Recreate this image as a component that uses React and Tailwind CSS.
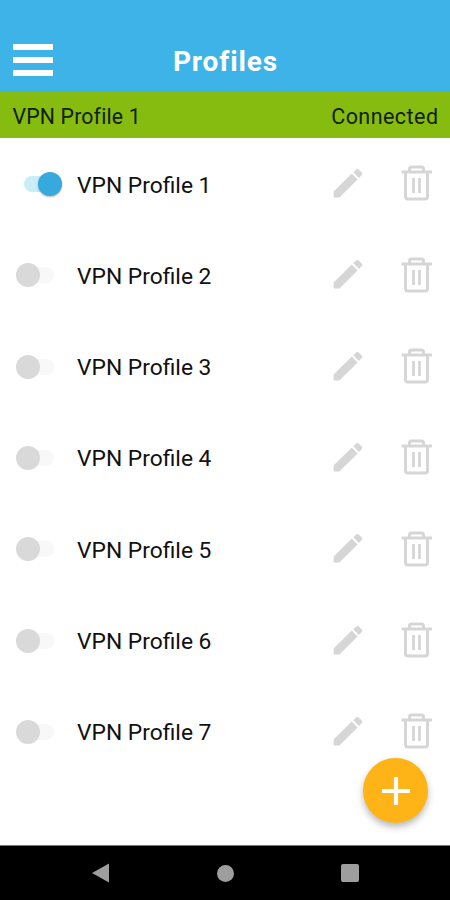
import React, { useState } from 'react';

const initialProfiles = [
  { id: 1, name: 'VPN Profile 1' },
  { id: 2, name: 'VPN Profile 2' },
  { id: 3, name: 'VPN Profile 3' },
  { id: 4, name: 'VPN Profile 4' },
  { id: 5, name: 'VPN Profile 5' },
  { id: 6, name: 'VPN Profile 6' },
  { id: 7, name: 'VPN Profile 7' },
];

const PencilIcon = () => (
  <svg width="30" height="30" viewBox="0 0 30 30" fill="#d6d6d6">
    <path d="M0.6 23.6 18.8 5.6 24.6 11.4 6.4 29.4H1.6Q0.6 29.4 0.6 28.4Z" />
    <path d="M20.3 4.3 23.2 1.4Q24.4 0.2 25.6 1.4L28.8 4.6Q30 5.8 28.8 7L25.9 9.9Z" />
  </svg>
);

const TrashIcon = () => (
  <svg width="32" height="36" viewBox="0 0 32 36" fill="none" stroke="#d6d6d6" strokeWidth="3">
    <path d="M0.5 7H31" />
    <path d="M8.5 6.5V4Q8.5 2 10.5 2H20.5Q22.5 2 22.5 4V6.5" />
    <path d="M4.5 7V31.5Q4.5 34 7 34H24Q26.5 34 26.5 31.5V7" />
    <path d="M12.5 13V28M18.5 13V28" strokeWidth="2.8" />
  </svg>
);

const Toggle = ({ on, onClick }) => (
  <button
    role="switch"
    aria-checked={on}
    onClick={onClick}
    className={`flex h-6 w-[38px] shrink-0 items-center ${on ? 'ml-6 mr-[15px]' : 'ml-4 mr-[23px]'}`}
  >
    {on ? (
      <span className="flex h-4 w-full items-center justify-end rounded-full bg-[#c9ecf7]">
        <span className="size-6 rounded-full bg-[#36a9dd] shadow-[0_1px_2px_rgba(0,0,0,0.3)]" />
      </span>
    ) : (
      <span className="flex h-4 w-full items-center rounded-full bg-[#f8f8f8]">
        <span className="size-6 rounded-full bg-[#d9d9d9]" />
      </span>
    )}
  </button>
);

const ProfileRow = ({ profile, active, onToggle }) => (
  <li className="flex h-[91.3px] items-center">
    <Toggle on={active} onClick={onToggle} />
    <span className="flex-1 pt-[3px] text-[22.8px] text-[#111]">{profile.name}</span>
    <button aria-label="Edit" className="mr-[38px] pb-[2px]">
      <PencilIcon />
    </button>
    <button aria-label="Delete" className="mr-[17px] pb-[1.5px]">
      <TrashIcon />
    </button>
  </li>
);

const App = () => {
  const [activeId, setActiveId] = useState(1);
  const active = initialProfiles.find((p) => p.id === activeId);

  return (
    <div className="relative flex h-[900px] w-[450px] flex-col overflow-hidden bg-white font-[Roboto,sans-serif]">
      <header className="grid h-[92px] shrink-0 grid-cols-[1fr_auto_1fr] items-end bg-[#3db3e8] px-[13px] pb-[14px]">
        <button aria-label="Menu" className="mb-[2.5px] flex w-10 flex-col gap-[7px]">
          <span className="h-[5.7px] bg-white" />
          <span className="h-[5.7px] bg-white" />
          <span className="h-[5.7px] bg-white" />
        </button>
        <h1 className="pl-[1px] text-[28px] leading-8 font-bold tracking-[0.9px] text-white">Profiles</h1>
      </header>

      <div className="flex h-[45.5px] shrink-0 items-center justify-between bg-[#86bc0f] pt-[4px] pr-[11.5px] pl-[12.5px] text-[#12200a]">
        <span className="text-[21.3px] tracking-[0.15px]">{active ? active.name : ''}</span>
        <span className="text-[21.5px] tracking-[0.45px]">{active ? 'Connected' : 'Disconnected'}</span>
      </div>

      <ul className="flex-1 pt-[1px]">
        {initialProfiles.map((profile) => (
          <ProfileRow
            key={profile.id}
            profile={profile}
            active={profile.id === activeId}
            onToggle={() => setActiveId(profile.id === activeId ? null : profile.id)}
          />
        ))}
      </ul>

      <button
        aria-label="Add profile"
        className="absolute top-[758px] left-[363px] flex size-[65px] items-center justify-center rounded-full bg-[#feb316] shadow-[0_4px_7px_rgba(0,0,0,0.28)]"
      >
        <svg width="28" height="28" viewBox="0 0 28 28" stroke="#fff" strokeWidth="4.2">
          <path d="M14 0V28M0 14H28" />
        </svg>
      </button>

      <nav className="flex h-[55px] shrink-0 items-center justify-between border-t border-[#777] bg-black pr-[91.5px] pl-[91.5px]">
        <svg width="18" height="20" viewBox="0 0 18 20" fill="#9e9e9e">
          <path d="M0 10 17 0.5V19.5Z" />
        </svg>
        <span className="size-[17px] rounded-full bg-[#9e9e9e]" />
        <span className="size-[18px] rounded-[2px] bg-[#9e9e9e]" />
      </nav>
    </div>
  );
};

export default App;
